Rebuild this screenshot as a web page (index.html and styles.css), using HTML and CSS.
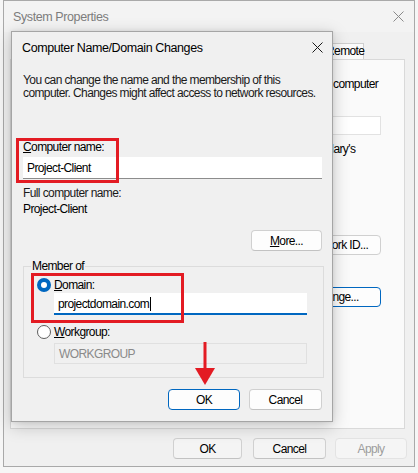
FILE: index.html
```html
<!DOCTYPE html>
<html>
<head>
<meta charset="utf-8">
<link rel="stylesheet" href="styles.css">
</head>
<body>
<div class="desktop">
  <div class="syswin">
    <div class="sys-title">
      <span class="sys-title-text">System Properties</span>
      <svg class="sys-close" width="11" height="11" viewBox="0 0 11 11"><path d="M0.5 0.5 L10.5 10.5 M10.5 0.5 L0.5 10.5" stroke="#8a8a8a" stroke-width="1" fill="none"/></svg>
    </div>
    <div class="tabs">
      <div class="tab">Remote</div>
    </div>
    <div class="panel">
      <div class="panel-col">
        <div class="bg-text t1">computer</div>
        <div class="bg-input"></div>
        <div class="bg-text t2">Mary's</div>
        <div class="bg-btn b1">Network ID...</div>
        <div class="bg-btn b2">Change...</div>
      </div>
    </div>
    <div class="sys-buttons">
      <div class="btn sys-ok">OK</div>
      <div class="btn sys-cancel">Cancel</div>
      <div class="btn sys-apply">Apply</div>
    </div>
  </div>

  <div class="dialog">
    <div class="dlg-title">
      <span>Computer Name/Domain Changes</span>
      <svg class="dlg-close" width="11" height="11" viewBox="0 0 11 11"><path d="M0.5 0.5 L10.5 10.5 M10.5 0.5 L0.5 10.5" stroke="#1a1a1a" stroke-width="1" fill="none"/></svg>
    </div>
    <div class="dlg-body">
      <p class="desc">You can change the name and the membership of this<br>computer. Changes might affect access to network resources.</p>
      <div class="label l-cname"><u>C</u>omputer name:</div>
      <div class="input name-input">Project-Client</div>
      <div class="label l-full">Full computer name:</div>
      <div class="label l-fullval">Project-Client</div>
      <div class="more-row"><div class="btn more-btn"><u>M</u>ore...</div></div>
      <fieldset class="group">
        <legend>Member of</legend>
        <div class="group-inner">
          <div class="radio-row">
            <span class="radio on"></span><span class="label"><u>D</u>omain:</span>
          </div>
          <div class="input domain-input">projectdomain.com<span class="caret"></span></div>
          <div class="radio-row r2">
            <span class="radio"></span><span class="label"><u>W</u>orkgroup:</span>
          </div>
          <div class="input wg-input">WORKGROUP</div>
        </div>
      </fieldset>
      <div class="dlg-buttons">
        <div class="btn ok-btn">OK</div>
        <div class="btn cancel-btn">Cancel</div>
      </div>
    </div>
  </div>

  <div class="redbox rb1"></div>
  <div class="redbox rb2"></div>
  <svg class="arrow" width="22" height="44" viewBox="0 0 22 44">
    <rect x="9.5" y="0" width="3" height="28" fill="#e31b23"/>
    <polygon points="1,26 21,26 11,43" fill="#e31b23"/>
  </svg>
</div>
</body>
</html>
```

FILE: styles.css
```css
* { box-sizing: border-box; }
html, body { margin: 0; padding: 0; }
body {
  background: #f6f6f6;
  font-family: "Liberation Sans", Arial, sans-serif;
  font-size: 12px;
  letter-spacing: -0.6px;
  color: #000;
}
.desktop {
  position: relative;
  width: 418px;
  height: 473px;
  overflow: hidden;
}

/* background window */
.syswin {
  position: absolute;
  left: 3px;
  top: 0;
  width: 412px;
  height: 467px;
  background: #f0f0f0;
  border: 1px solid #a9a9a9;
  display: flex;
  flex-direction: column;
}
.sys-title {
  height: 31px;
  display: flex;
  align-items: center;
  justify-content: space-between;
  padding: 0 10px 0 9px;
  background: #f3f3f3;
}
.sys-title-text {
  color: #7d7d7d;
  font-size: 12.5px;
  letter-spacing: -0.4px;
}
.tabs {
  height: 27px;
  display: flex;
  align-items: flex-end;
  padding-left: 306px;
}
.tab {
  height: 16px;
  width: 54px;
  border: 1px solid #cfcfcf;
  border-bottom: none;
  background: #fbfbfb;
  line-height: 14px;
  padding-left: 15px;
  font-size: 12px;
}
.panel {
  margin: 0 9px 0 6px;
  height: 370px;
  border: 1px solid #d9d9d9;
  background: #fafafa;
  display: flex;
}
.panel-col {
  margin-left: auto;
  margin-right: 23px;
  width: 91px;
  display: flex;
  flex-direction: column;
}
.bg-text { line-height: 13px; white-space: nowrap; }
.t1 { margin-top: 18px; padding-left: 43px; }
.bg-input {
  margin-top: 25px;
  height: 19px;
  background: #fff;
  border: 1px solid #e2e2e2;
}
.t2 { margin-top: 8px; padding-left: 34px; }
.bg-btn {
  height: 20px;
  border: 1px solid #d0d0d0;
  border-radius: 4px;
  background: #fdfdfd;
  text-align: center;
  line-height: 18px;
  white-space: nowrap;
}
.b1 { margin-top: 79px; padding-left: 4px; }
.b2 { margin-top: 32px; border-color: #0067c0; }
.sys-buttons {
  margin-top: 9px;
  display: flex;
  padding-left: 169px;
}
.btn {
  height: 21px;
  border: 1px solid #d0d0d0;
  border-bottom-color: #c2c2c2;
  border-radius: 4px;
  background: #fdfdfd;
  display: flex;
  align-items: center;
  justify-content: center;
  font-size: 12px;
}
.sys-ok { width: 69px; background: #f4f4f4; }
.sys-cancel { width: 73px; margin-left: 11px; background: #f4f4f4; }
.sys-apply { width: 72px; margin-left: 9px; color: #9d9d9d; background: #f5f5f5; border-color: #e3e3e3; }

/* dialog */
.dialog {
  position: absolute;
  left: 11px;
  top: 31px;
  width: 322px;
  height: 391px;
  background: #f0f0f0;
  border: 1px solid #a5a5a5;
  box-shadow: 0 4px 16px rgba(0,0,0,0.22), 0 0 4px rgba(0,0,0,0.08);
  display: flex;
  flex-direction: column;
}
.dlg-title {
  height: 31px;
  display: flex;
  align-items: center;
  justify-content: space-between;
  padding: 0 9px 0 10px;
  font-size: 12.5px;
  letter-spacing: -0.4px;
  color: #000;
}
.dlg-body {
  padding: 0 10px 0 11px;
  display: flex;
  flex-direction: column;
}
.desc {
  margin: 11px 0 0 0;
  line-height: 13px;
  white-space: nowrap;
  color: #1a1a1a;
}
.label { line-height: 13px; }
.l-cname { margin-top: 41px; }
.input {
  height: 22px;
  background: #fff;
  border-bottom: 1px solid #8c8c8c;
  display: flex;
  align-items: center;
  padding-left: 4px;
}
.name-input { margin-top: 3px; }
.l-full { margin-top: 8px; color: #1a1a1a; }
.l-fullval { margin-top: 3px; }
.more-row {
  margin-top: 14px;
  display: flex;
  justify-content: flex-end;
}
.more-btn { width: 71px; }
.group {
  margin: 9px -2px 0 0;
  padding: 0;
  border: 1px solid #dcdcdc;
  height: 118px;
}
.group legend {
  margin-left: 7px;
  padding: 0 1px;
  line-height: 13px;
  font-size: 12px;
}
.group-inner {
  padding: 5px 16px 0 13px;
  display: flex;
  flex-direction: column;
}
.radio-row {
  display: flex;
  align-items: center;
  height: 14px;
}
.r2 { margin-top: 10px; }
.radio {
  width: 14px;
  height: 14px;
  border-radius: 50%;
  border: 1px solid #5e5e5e;
  background: #fff;
  margin-right: 3px;
}
.radio.on {
  border: 4px solid #0067c0;
  background: #fff;
}
.domain-input {
  margin: 1px 0 0 17px;
  height: 22px;
  border-bottom: 2px solid #0067c0;
  padding-top: 1px;
}
.caret {
  display: inline-block;
  width: 1px;
  height: 14px;
  background: #000;
  margin-left: 1px;
}
.wg-input {
  margin: 4px 0 0 17px;
  height: 21px;
  background: #f0f0f0;
  border: 1px solid #e0e0e0;
  color: #8a8a8a;
}
.dlg-buttons {
  margin-top: 11px;
  display: flex;
  justify-content: flex-end;
  gap: 9px;
}
.ok-btn { width: 72px; border: 1px solid #0067c0; }
.cancel-btn { width: 73px; }

/* annotations */
.redbox {
  position: absolute;
  border: 3px solid #e31b23;
}
.rb1 { left: 16px; top: 138px; width: 103px; height: 45px; }
.rb2 { left: 31px; top: 273px; width: 153px; height: 50px; }
.arrow { position: absolute; left: 194px; top: 342px; }
```
